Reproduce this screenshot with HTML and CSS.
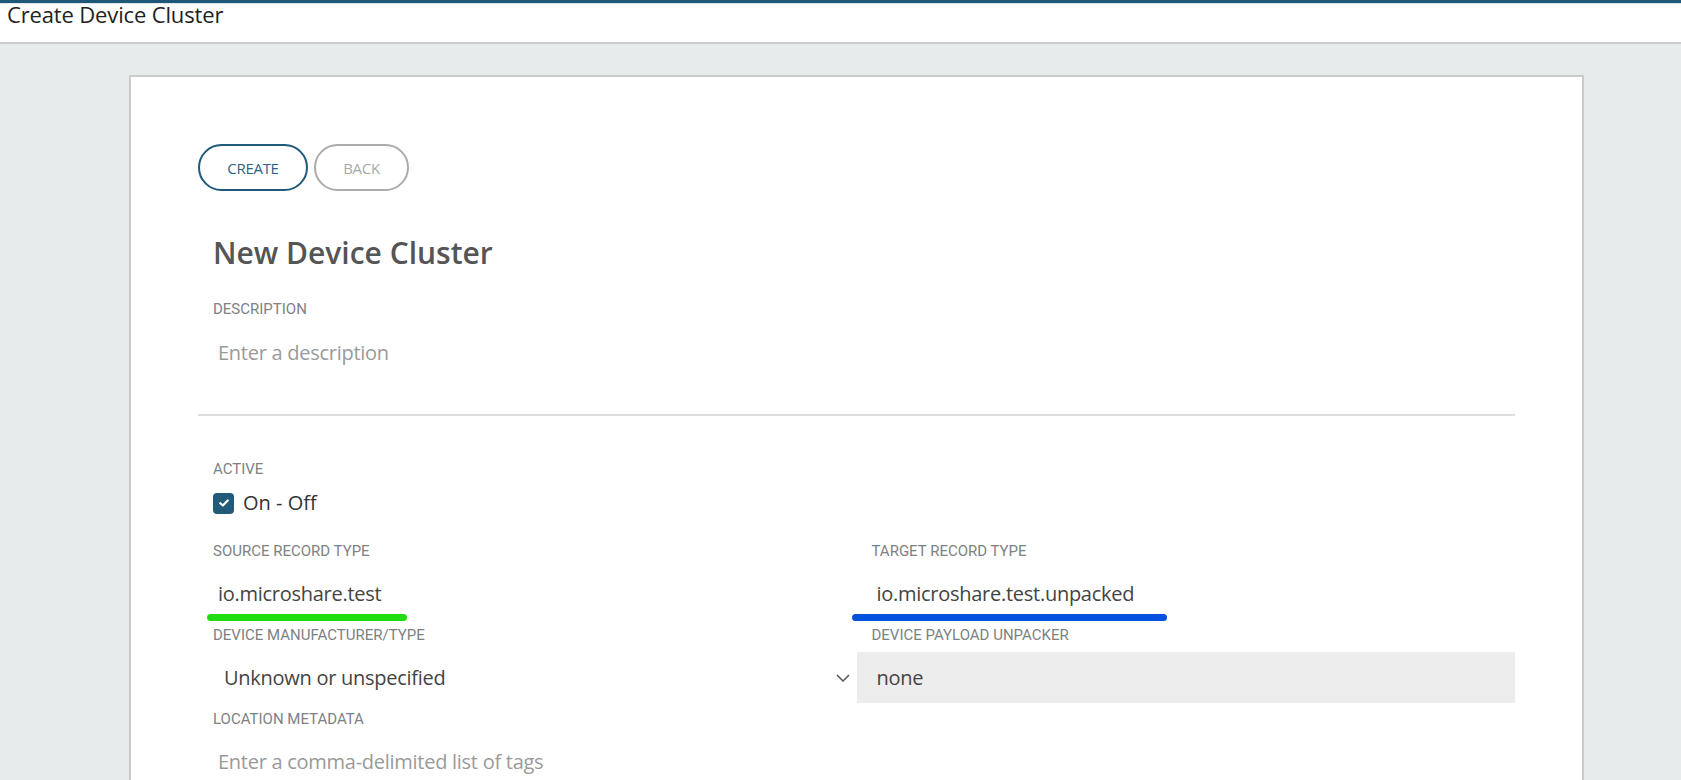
FILE: index.html
```html
<!DOCTYPE html>
<html lang="en">
<head>
<meta charset="utf-8">
<title>Create Device Cluster</title>
<link rel="stylesheet" href="styles.css">
</head>
<body>
<header class="topbar">
  <h1 class="topbar-title">Create Device Cluster</h1>
</header>
<main class="page">
  <section class="card">
    <div class="actions">
      <button class="btn btn-primary" type="button">CREATE</button>
      <button class="btn btn-muted" type="button">BACK</button>
    </div>
    <h2 class="heading">New Device Cluster</h2>

    <div class="field">
      <div class="label">DESCRIPTION</div>
      <input class="input" type="text" placeholder="Enter a description">
    </div>

    <hr class="divider">

    <div class="field field-active">
      <div class="label">ACTIVE</div>
      <label class="check">
        <span class="check-box">
          <svg width="10" height="8" viewBox="0 0 10 8"><path d="M1.3 4.2 L3.9 6.5 L8.7 1.5" fill="none" stroke="#fff" stroke-width="2.2" stroke-linecap="round" stroke-linejoin="round"/></svg>
        </span>
        <span class="check-text">On - Off</span>
      </label>
    </div>

    <div class="cols">
      <div class="field">
        <div class="label">SOURCE RECORD TYPE</div>
        <input class="input" type="text" value="io.microshare.test">
        <span class="mark mark-green"></span>
      </div>
      <div class="field">
        <div class="label">TARGET RECORD TYPE</div>
        <input class="input" type="text" value="io.microshare.test.unpacked">
        <span class="mark mark-blue"></span>
      </div>

      <div class="field">
        <div class="label">DEVICE MANUFACTURER/TYPE</div>
        <div class="select select-plain">
          <span>Unknown or unspecified</span>
          <svg width="14" height="8" viewBox="0 0 14 8"><path d="M1 1 L7 7 L13 1" fill="none" stroke="#555" stroke-width="1.5"/></svg>
        </div>
      </div>
      <div class="field">
        <div class="label">DEVICE PAYLOAD UNPACKER</div>
        <div class="select select-disabled">
          <span>none</span>
        </div>
      </div>

      <div class="field">
        <div class="label">LOCATION METADATA</div>
        <input class="input" type="text" placeholder="Enter a comma-delimited list of tags">
      </div>
    </div>
  </section>
</main>
</body>
</html>
```

FILE: styles.css
```css
* { box-sizing: border-box; }

html, body {
  margin: 0;
  padding: 0;
}

body {
  height: 780px;
  overflow: hidden;
  background: #e8ebeb;
  font-family: "Open Sans", "Liberation Sans", sans-serif;
  color: #444;
}

.topbar {
  background: #fff;
  border-top: 3px solid #1e5777;
  box-shadow: inset 0 1px 0 #e3e5e6;
  border-bottom: 2px solid #cbcbcb;
  height: 44px;
}

.topbar-title {
  margin: 0;
  padding-left: 7px;
  font-size: 22px;
  line-height: 22px;
  letter-spacing: -0.15px;
  font-weight: 400;
  color: #222;
}

.page {
  padding: 31px 97px 0 129px;
}

.card {
  background: #fff;
  border: 2px solid #cbcbcb;
  padding: 67px 67px 200px 67px;
}

.actions {
  display: flex;
  gap: 6px;
}

.btn {
  height: 47px;
  border-radius: 24px;
  background: #fff;
  font-family: "Open Sans", "Liberation Sans", sans-serif;
  font-size: 15px;
  letter-spacing: -0.3px;
  padding: 0;
  cursor: pointer;
}

.btn-primary {
  width: 110px;
  border: 2px solid #1f5a7a;
  color: #2b6384;
}

.btn-muted {
  width: 95px;
  border: 2px solid #ababab;
  color: #a9a9a9;
}

.heading {
  margin: 42px 0 0 0;
  padding-left: 15px;
  font-size: 30px;
  line-height: 40px;
  font-weight: 600;
  color: #555;
}

.field {
  position: relative;
}

.heading + .field { margin-top: 26px; }

.label {
  padding-left: 15px;
  font-family: Roboto, "Liberation Sans", sans-serif;
  font-size: 15px;
  line-height: 20px;
  color: #7d8284;
  margin-bottom: 9px;
}

.cols .label { margin-bottom: 8px; }

.input {
  display: block;
  width: 100%;
  height: 48px;
  padding: 10px 5px 10px 20px;
  border: none;
  outline: none;
  background: transparent;
  font-family: "Open Sans", "Liberation Sans", sans-serif;
  font-size: 20px;
  line-height: 28px;
  letter-spacing: -0.27px;
  color: #444;
}

.input::placeholder { color: #9a9a9a; }

.divider {
  border: none;
  height: 2px;
  background: #dddddd;
  margin: 38px 0 0 0;
}

.field-active { margin-top: 43px; }

.check {
  display: flex;
  align-items: center;
  gap: 9px;
  padding-left: 15px;
  height: 30px;
}

.check-box {
  width: 21px;
  height: 21px;
  border-radius: 4px;
  background: #235a79;
  display: flex;
  align-items: center;
  justify-content: center;
}

.check-text {
  font-size: 20px;
  line-height: 28px;
  color: #333;
}

.cols {
  margin-top: 23px;
  display: grid;
  grid-template-columns: 1fr 1fr;
}

.cols .field:nth-child(1),
.cols .field:nth-child(2) { margin-bottom: 8px; }

.cols .field:nth-child(3),
.cols .field:nth-child(4) { margin-bottom: 6px; }

.cols .field:nth-child(3) .label,
.cols .field:nth-child(4) .label { margin-bottom: 7px; }

.select {
  height: 51px;
  display: flex;
  align-items: center;
  justify-content: space-between;
  font-size: 20px;
  letter-spacing: -0.27px;
  color: #444;
}

.select-plain {
  padding: 0 7px 0 26px;
}

.select-disabled {
  background: #ededed;
  padding: 0 20px;
}

.mark {
  position: absolute;
  height: 7px;
  border-radius: 4px;
  top: 73px;
}

.mark-green {
  left: 9px;
  width: 200px;
  background: #22dd11;
}

.mark-blue {
  left: -5px;
  width: 315px;
  background: #0050e0;
}
```
